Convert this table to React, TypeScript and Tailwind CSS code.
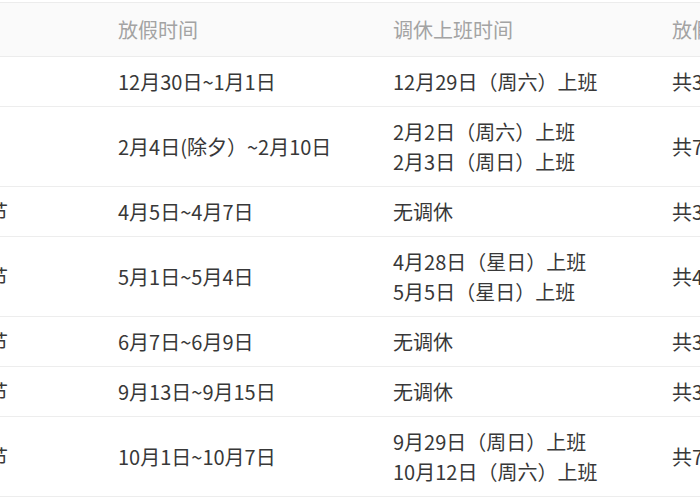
type Holiday = {
  name: string;
  range: string;
  work: string[];
  days: string;
};

const holidays: Holiday[] = [
  { name: '元旦', range: '12月30日~1月1日', work: ['12月29日（周六）上班'], days: '共3天' },
  { name: '春节', range: '2月4日(除夕）~2月10日', work: ['2月2日（周六）上班', '2月3日（周日）上班'], days: '共7天' },
  { name: '清明节', range: '4月5日~4月7日', work: ['无调休'], days: '共3天' },
  { name: '劳动节', range: '5月1日~5月4日', work: ['4月28日（星日）上班', '5月5日（星日）上班'], days: '共4天' },
  { name: '端午节', range: '6月7日~6月9日', work: ['无调休'], days: '共3天' },
  { name: '中秋节', range: '9月13日~9月15日', work: ['无调休'], days: '共3天' },
  { name: '国庆节', range: '10月1日~10月7日', work: ['9月29日（周日）上班', '10月12日（周六）上班'], days: '共7天' },
];

const cols = 'grid grid-cols-[170px_275px_279px_200px] ml-[-67px] w-[924px]';

export default function App() {
  return (
    <div
      className="w-[700px] h-[500px] overflow-hidden bg-white pt-[2px] text-[20px]"
      style={{ fontFamily: '"Noto Sans CJK SC", "Noto Sans", sans-serif' }}
    >
      <div className={`${cols} h-[55px] items-center bg-[#fafafa] border-t border-b border-[#ececec] text-[#a3a3a3]`}>
        <div className="pl-[15px]">节日</div>
        <div className="pl-[15px]">放假时间</div>
        <div className="pl-[15px]">调休上班时间</div>
        <div className="pl-[15px]">放假天数</div>
      </div>
      {holidays.map((h) => (
        <div
          key={h.name}
          className={`${cols} ${h.work.length > 1 ? 'h-[80px]' : 'h-[50px]'} items-center border-b border-[#ededed] text-[#383838]`}
        >
          <div className="pl-[15px]">{h.name}</div>
          <div className="pl-[15px] whitespace-nowrap">{h.range}</div>
          <div className="pl-[15px] leading-[30px] whitespace-nowrap">
            {h.work.map((w) => (
              <div key={w}>{w}</div>
            ))}
          </div>
          <div className="pl-[15px]">{h.days}</div>
        </div>
      ))}
    </div>
  );
}
